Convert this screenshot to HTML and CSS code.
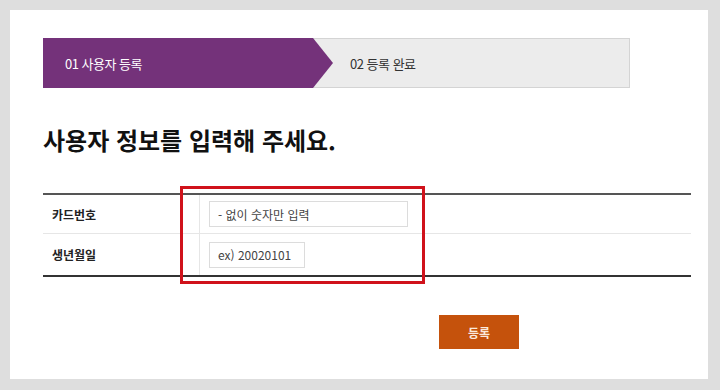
FILE: index.html
```html
<!DOCTYPE html>
<html lang="ko">
<head>
  <meta charset="UTF-8">
  <meta name="viewport" content="width=device-width, initial-scale=1">
  <title>사용자 등록</title>
  <link rel="stylesheet" href="styles.css">
</head>
<body>

<div class="page">
  <div class="steps">
    <div class="step step-on">01 사용자 등록</div>
    <div class="step step-off">02 등록 완료</div>
  </div>

  <h1>사용자 정보를 입력해 주세요.</h1>

  <div class="form">
    <div class="row">
      <div class="label">카드번호</div>
      <div class="field"><input class="card" type="text" placeholder="- 없이 숫자만 입력"></div>
    </div>
    <div class="row">
      <div class="label">생년월일</div>
      <div class="field"><input class="birth" type="text" placeholder="ex) 20020101"></div>
    </div>
  </div>

  <div class="actions">
    <button class="btn">등록</button>
  </div>

  <!-- 강조 표시 -->
  <div class="highlight"></div>
</div>

</body>
</html>
```

FILE: styles.css
```css
body {
  margin: 0;
  padding: 10px 12px 11px 10px;
  background-color: #dedede;
  font-family: "Noto Sans CJK KR", "Noto Sans", sans-serif;
  color: #222;
}

.page {
  position: relative;
  height: 369px;
  box-sizing: border-box;
  padding: 28px 17px 0 33px;
  background-color: #fff;
}

/* 단계 표시 */
.steps {
  display: flex;
  width: 587px;
  height: 50px;
}

.step {
  display: flex;
  align-items: center;
  box-sizing: border-box;
  height: 50px;
  font-size: 13px;
  letter-spacing: -0.5px;
}

.step-on {
  position: relative;
  z-index: 1;
  flex: 0 0 290px;
  padding-left: 22px;
  background-color: #74327a;
  color: #fff;
  clip-path: polygon(0 0, 270px 0, 290px 50%, 270px 100%, 0 100%);
}

.step-off {
  flex: 1;
  margin-left: -20px;
  padding-left: 36px;
  background-color: #ececec;
  border: 1px solid #d4d4d4;
  color: #333;
}

h1 {
  margin: 35px 0 0;
  font-size: 24px;
  line-height: 34px;
  font-weight: bold;
  color: #111;
}

/* 입력 폼 */
.form {
  width: 648px;
  margin-top: 36px;
  border-top: 2px solid #555;
  border-bottom: 2px solid #333;
}

.row {
  display: grid;
  grid-template-columns: 156px 1fr;
  height: 38px;
}

.row + .row {
  height: 41px;
  border-top: 1px solid #e6e6e6;
}

.label {
  display: flex;
  align-items: center;
  padding-left: 9px;
  font-size: 12px;
  font-weight: bold;
  color: #222;
}

.field {
  display: flex;
  align-items: center;
  padding-left: 9px;
  border-left: 1px solid #e6e6e6;
}

.field input {
  box-sizing: border-box;
  height: 26px;
  padding: 0 8px;
  border: 1px solid #dcdcdc;
  font-family: inherit;
  font-size: 12px;
  color: #333;
  outline: none;
}

.field input::placeholder {
  color: #444;
}

.card {
  width: 199px;
}

.birth {
  width: 96px;
}

.actions {
  display: flex;
  margin-top: 38px;
  padding-left: 396px;
}

.btn {
  width: 80px;
  height: 34px;
  border: none;
  background-color: #c5520c;
  color: #fbe9dc;
  font-family: inherit;
  font-size: 12px;
  font-weight: bold;
  cursor: pointer;
}

.highlight {
  position: absolute;
  left: 170px;
  top: 176px;
  width: 245px;
  height: 98px;
  box-sizing: border-box;
  border: 3px solid #d0121b;
  pointer-events: none;
}
```
